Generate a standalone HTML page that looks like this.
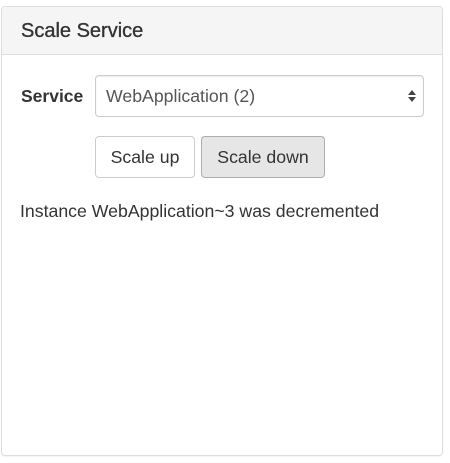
<!DOCTYPE html>
<html><head><style>
body{margin:0;background:#fff;font-family:"Liberation Sans",Arial,sans-serif;color:#333;}
.panel{position:absolute;left:1px;top:6px;width:440px;height:448px;border:1px solid #ddd;border-radius:4px;box-shadow:0 1px 1px rgba(0,0,0,.05);overflow:hidden;}
.hd{height:47px;background:#f5f5f5;border-bottom:1px solid #ddd;}
.hd span{position:absolute;left:19px;top:13px;font-size:20px;color:#333;-webkit-text-stroke:0.35px #333;}
.lbl{position:absolute;left:19px;top:79px;font-weight:bold;font-size:17.5px;}
.sel{position:absolute;left:93px;top:68px;width:327px;height:40px;border:1px solid #ccc;border-radius:4px;box-shadow:inset 0 1px 1px rgba(0,0,0,.075);}
.sel span{position:absolute;left:10px;top:10px;font-size:17.7px;color:#555;}
.btn{position:absolute;top:129px;height:40px;border:1px solid #ccc;border-radius:4px;font-size:17.7px;text-align:center;line-height:40px;background:#fff;}
.msg{position:absolute;left:18px;top:194px;font-size:17.7px;}
</style></head><body>
<div class="panel">
<div class="hd"><span>Scale Service</span></div>
<div class="lbl">Service</div>
<div class="sel"><span>WebApplication (2)</span>
<svg style="position:absolute;right:7px;top:13px" width="8" height="14"><path d="M4 1L8 6H0Z M4 13L8 8H0Z" fill="#444"/></svg></div>
<div class="btn" style="left:93px;width:98px">Scale up</div>
<div class="btn" style="left:199px;width:122px;background:#e6e6e6;border-color:#adadad">Scale down</div>
<div class="msg">Instance WebApplication~3 was decremented</div>
</div>
</body></html>
